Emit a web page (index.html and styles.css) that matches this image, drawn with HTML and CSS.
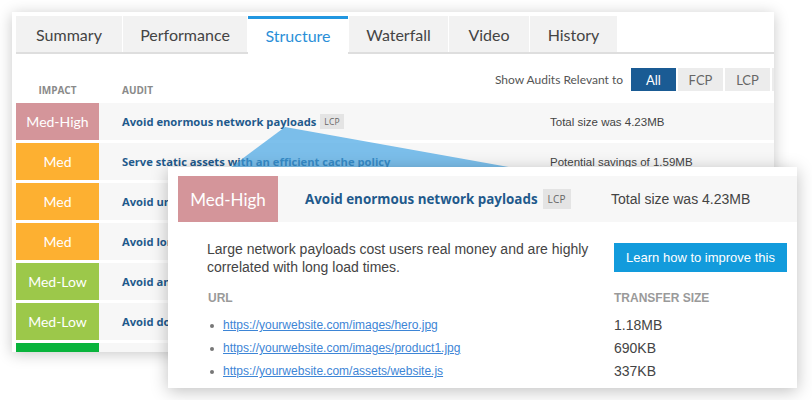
FILE: index.html
```html
<!DOCTYPE html>
<html lang="en">
<head>
<meta charset="utf-8">
<title>Structure audits</title>
<link rel="stylesheet" href="styles.css">
</head>
<body>
<div class="stage">
  <div class="panel">
    <nav class="tabs">
      <div class="tab w-summary">Summary</div>
      <div class="tab w-perf">Performance</div>
      <div class="tab w-struct active">Structure</div>
      <div class="tab w-water">Waterfall</div>
      <div class="tab w-video">Video</div>
      <div class="tab w-history">History</div>
    </nav>
    <div class="toolbar">
      <div class="labels">
        <span class="lbl-impact">IMPACT</span>
        <span class="lbl-audit">AUDIT</span>
      </div>
      <div class="filter">
        <span class="filter-label">Show Audits Relevant to</span>
        <span class="chip active">All</span>
        <span class="chip">FCP</span>
        <span class="chip">LCP</span>
        <span class="chip"></span>
      </div>
    </div>
    <div class="rows">
      <div class="row">
        <div class="badge med-high">Med-High</div>
        <div class="audit">Avoid enormous network payloads <span class="tag">LCP</span></div>
        <div class="detail">Total size was 4.23MB</div>
      </div>
      <div class="row">
        <div class="badge med">Med</div>
        <div class="audit">Serve static assets with an efficient cache policy</div>
        <div class="detail">Potential savings of 1.59MB</div>
      </div>
      <div class="row">
        <div class="badge med">Med</div>
        <div class="audit">Avoid unload event listeners</div>
        <div class="detail">1 listener found</div>
      </div>
      <div class="row">
        <div class="badge med">Med</div>
        <div class="audit">Avoid long main-thread tasks</div>
        <div class="detail">4 long tasks found</div>
      </div>
      <div class="row">
        <div class="badge med-low">Med-Low</div>
        <div class="audit">Avoid an excessive DOM size</div>
        <div class="detail">1,204 elements</div>
      </div>
      <div class="row">
        <div class="badge med-low">Med-Low</div>
        <div class="audit">Avoid document.write()</div>
        <div class="detail">1 call found</div>
      </div>
      <div class="row">
        <div class="badge low"></div>
        <div class="audit"></div>
        <div class="detail"></div>
      </div>
    </div>
  </div>

  <svg class="pointer" width="812" height="400" viewBox="0 0 812 400" aria-hidden="true">
    <polygon points="285,127 230,168 514,168" fill="#3fa2e3" fill-opacity="0.68"/>
  </svg>

  <div class="popup">
    <div class="pop-head">
      <div class="badge big med-high">Med-High</div>
      <div class="pop-title">Avoid enormous network payloads <span class="tag big">LCP</span></div>
      <div class="pop-detail">Total size was 4.23MB</div>
    </div>
    <div class="pop-body">
      <p class="desc">Large network payloads cost users real money and are highly correlated with long load times.</p>
      <div class="learn-wrap"><a class="learn" href="#">Learn how to improve this</a></div>
      <div class="col-head url-head">URL</div>
      <div class="col-head">TRANSFER SIZE</div>
      <ul class="urls">
        <li><a href="#">https://yourwebsite.com/images/hero.jpg</a></li>
        <li><a href="#">https://yourwebsite.com/images/product1.jpg</a></li>
        <li><a href="#">https://yourwebsite.com/assets/website.js</a></li>
      </ul>
      <ul class="sizes">
        <li>1.18MB</li>
        <li>690KB</li>
        <li>337KB</li>
      </ul>
    </div>
  </div>
</div>
</body>
</html>
```

FILE: styles.css
```css
* { box-sizing: border-box; }
html, body { margin: 0; padding: 0; background: #fff; }
body { font-family: "Liberation Sans", Arial, sans-serif; color: #444; }

.stage {
  position: relative;
  width: 812px;
  height: 400px;
  overflow: hidden;
}

/* ---------- back panel ---------- */
.panel {
  margin: 12px 0 0 12px;
  width: 762px;
  height: 340px;
  padding: 4px 0 0 4px;
  background: #fff;
  overflow: hidden;
  box-shadow: 0 2px 14px rgba(0,0,0,0.22);
}

.tabs {
  display: flex;
  gap: 1px;
  height: 38px;
  border-bottom: 2px solid #dedede;
}
.tab {
  height: 36px;
  background: #f2f2f2;
  font-family: Lato, "Open Sans", sans-serif;
  font-size: 16px;
  color: #444;
  display: flex;
  align-items: center;
  justify-content: center;
}
.tab.active {
  background: #fff;
  color: #2a8fd8;
  border-top: 3px solid #2196e0;
  height: 38px;
  padding-bottom: 3px;
  margin-bottom: -2px;
  position: relative;
}
.w-summary { width: 106px; }
.w-perf { width: 124px; }
.w-struct { width: 100px; }
.w-water { width: 99px; }
.w-video { width: 80px; }
.w-history { width: 87px; }

.toolbar {
  display: flex;
  justify-content: space-between;
  margin-top: 14px;
  height: 35px;
}
.labels {
  align-self: flex-end;
  display: flex;
  padding-bottom: 7px;
  font-family: "Open Sans", sans-serif;
  font-size: 10px;
  font-weight: 700;
  color: #8a8a8a;
  line-height: 12px;
}
.lbl-impact { width: 83px; text-align: center; }
.lbl-audit { padding-left: 23px; }

.filter {
  display: flex;
  align-items: center;
  gap: 2px;
  height: 23px;
  margin-right: -43px;
  font-family: Lato, "Open Sans", sans-serif;
  font-size: 13px;
}
.filter-label { color: #555; margin-right: 6px; font-size: 12px; }
.chip {
  width: 45px;
  height: 23px;
  display: flex;
  align-items: center;
  justify-content: center;
  background: #ececec;
  color: #666;
}
.chip.active { background: #1a5b94; color: #fff; }

.rows { display: flex; flex-direction: column; gap: 3px; }
.row {
  display: flex;
  align-items: center;
  height: 37px;
  flex: none;
  background: #f7f7f7;
}
.badge {
  width: 83px;
  height: 100%;
  display: flex;
  align-items: center;
  justify-content: center;
  color: #fff;
  font-family: Lato, "Open Sans", sans-serif;
  font-size: 14px;
  flex: none;
}
.med-high { background: #d4959a; }
.med { background: #fdb031; }
.med-low { background: #9cc84a; }
.low { background: #09b43c; }

.audit {
  width: 451px;
  padding-left: 23px;
  font-family: "Open Sans", sans-serif;
  font-weight: 700;
  font-size: 11.2px;
  color: #1f5a8c;
  display: flex;
  align-items: center;
  white-space: nowrap;
}
.tag {
  margin-left: 4px;
  background: #e4e4e4;
  color: #666;
  font-weight: 400;
  font-size: 8.5px;
  padding: 2px 4px;
  letter-spacing: 0.2px;
}
.detail {
  font-size: 11.5px;
  color: #444;
  white-space: nowrap;
}

/* ---------- pointer ---------- */
.pointer {
  position: absolute;
  left: 0;
  top: 0;
  pointer-events: none;
}

/* ---------- popup ---------- */
.popup {
  position: absolute;
  left: 168px;
  top: 167px;
  width: 629px;
  height: 221px;
  background: #fff;
  padding: 9px 0 0 10px;
  box-shadow: 0 3px 16px rgba(0,0,0,0.25);
}
.pop-head {
  display: flex;
  align-items: center;
  height: 46px;
  background: #f7f7f7;
}
.badge.big { width: 100px; font-size: 17px; }
.pop-title {
  width: 333px;
  padding-left: 27px;
  font-family: "Open Sans", sans-serif;
  font-weight: 700;
  font-size: 13.4px;
  color: #1f5a8c;
  display: flex;
  align-items: center;
  white-space: nowrap;
}
.tag.big { font-size: 10px; padding: 3px 5px; margin-left: 5px; }
.pop-detail { font-size: 14px; color: #444; }

.pop-body {
  display: grid;
  grid-template-columns: 407px 173px;
  padding-left: 29px;
}
.desc {
  margin: 18px 0 0;
  font-size: 14px;
  line-height: 18px;
  color: #444;
  padding-right: 20px;
}
.learn-wrap { padding-top: 21px; }
.learn {
  display: flex;
  align-items: center;
  justify-content: center;
  height: 29px;
  background: #129bdc;
  color: #fff;
  font-size: 13px;
  text-decoration: none;
}
.col-head {
  margin-top: 15px;
  font-size: 12px;
  line-height: 14px;
  font-weight: 700;
  color: #9a9a9a;
}
.url-head { padding-left: 1px; }
.urls, .sizes {
  list-style: none;
  margin: 9px 0 0;
  padding: 0;
}
.urls li, .sizes li { height: 23px; line-height: 23px; }
.urls li { padding-left: 16px; position: relative; font-size: 12px; }
.urls li::before {
  content: "";
  position: absolute;
  left: 3px;
  top: 10px;
  width: 4px;
  height: 4px;
  border-radius: 50%;
  background: #777;
}
.urls a { color: #3d85d6; text-decoration: underline; }
.sizes li { font-size: 14px; color: #444; }
```
